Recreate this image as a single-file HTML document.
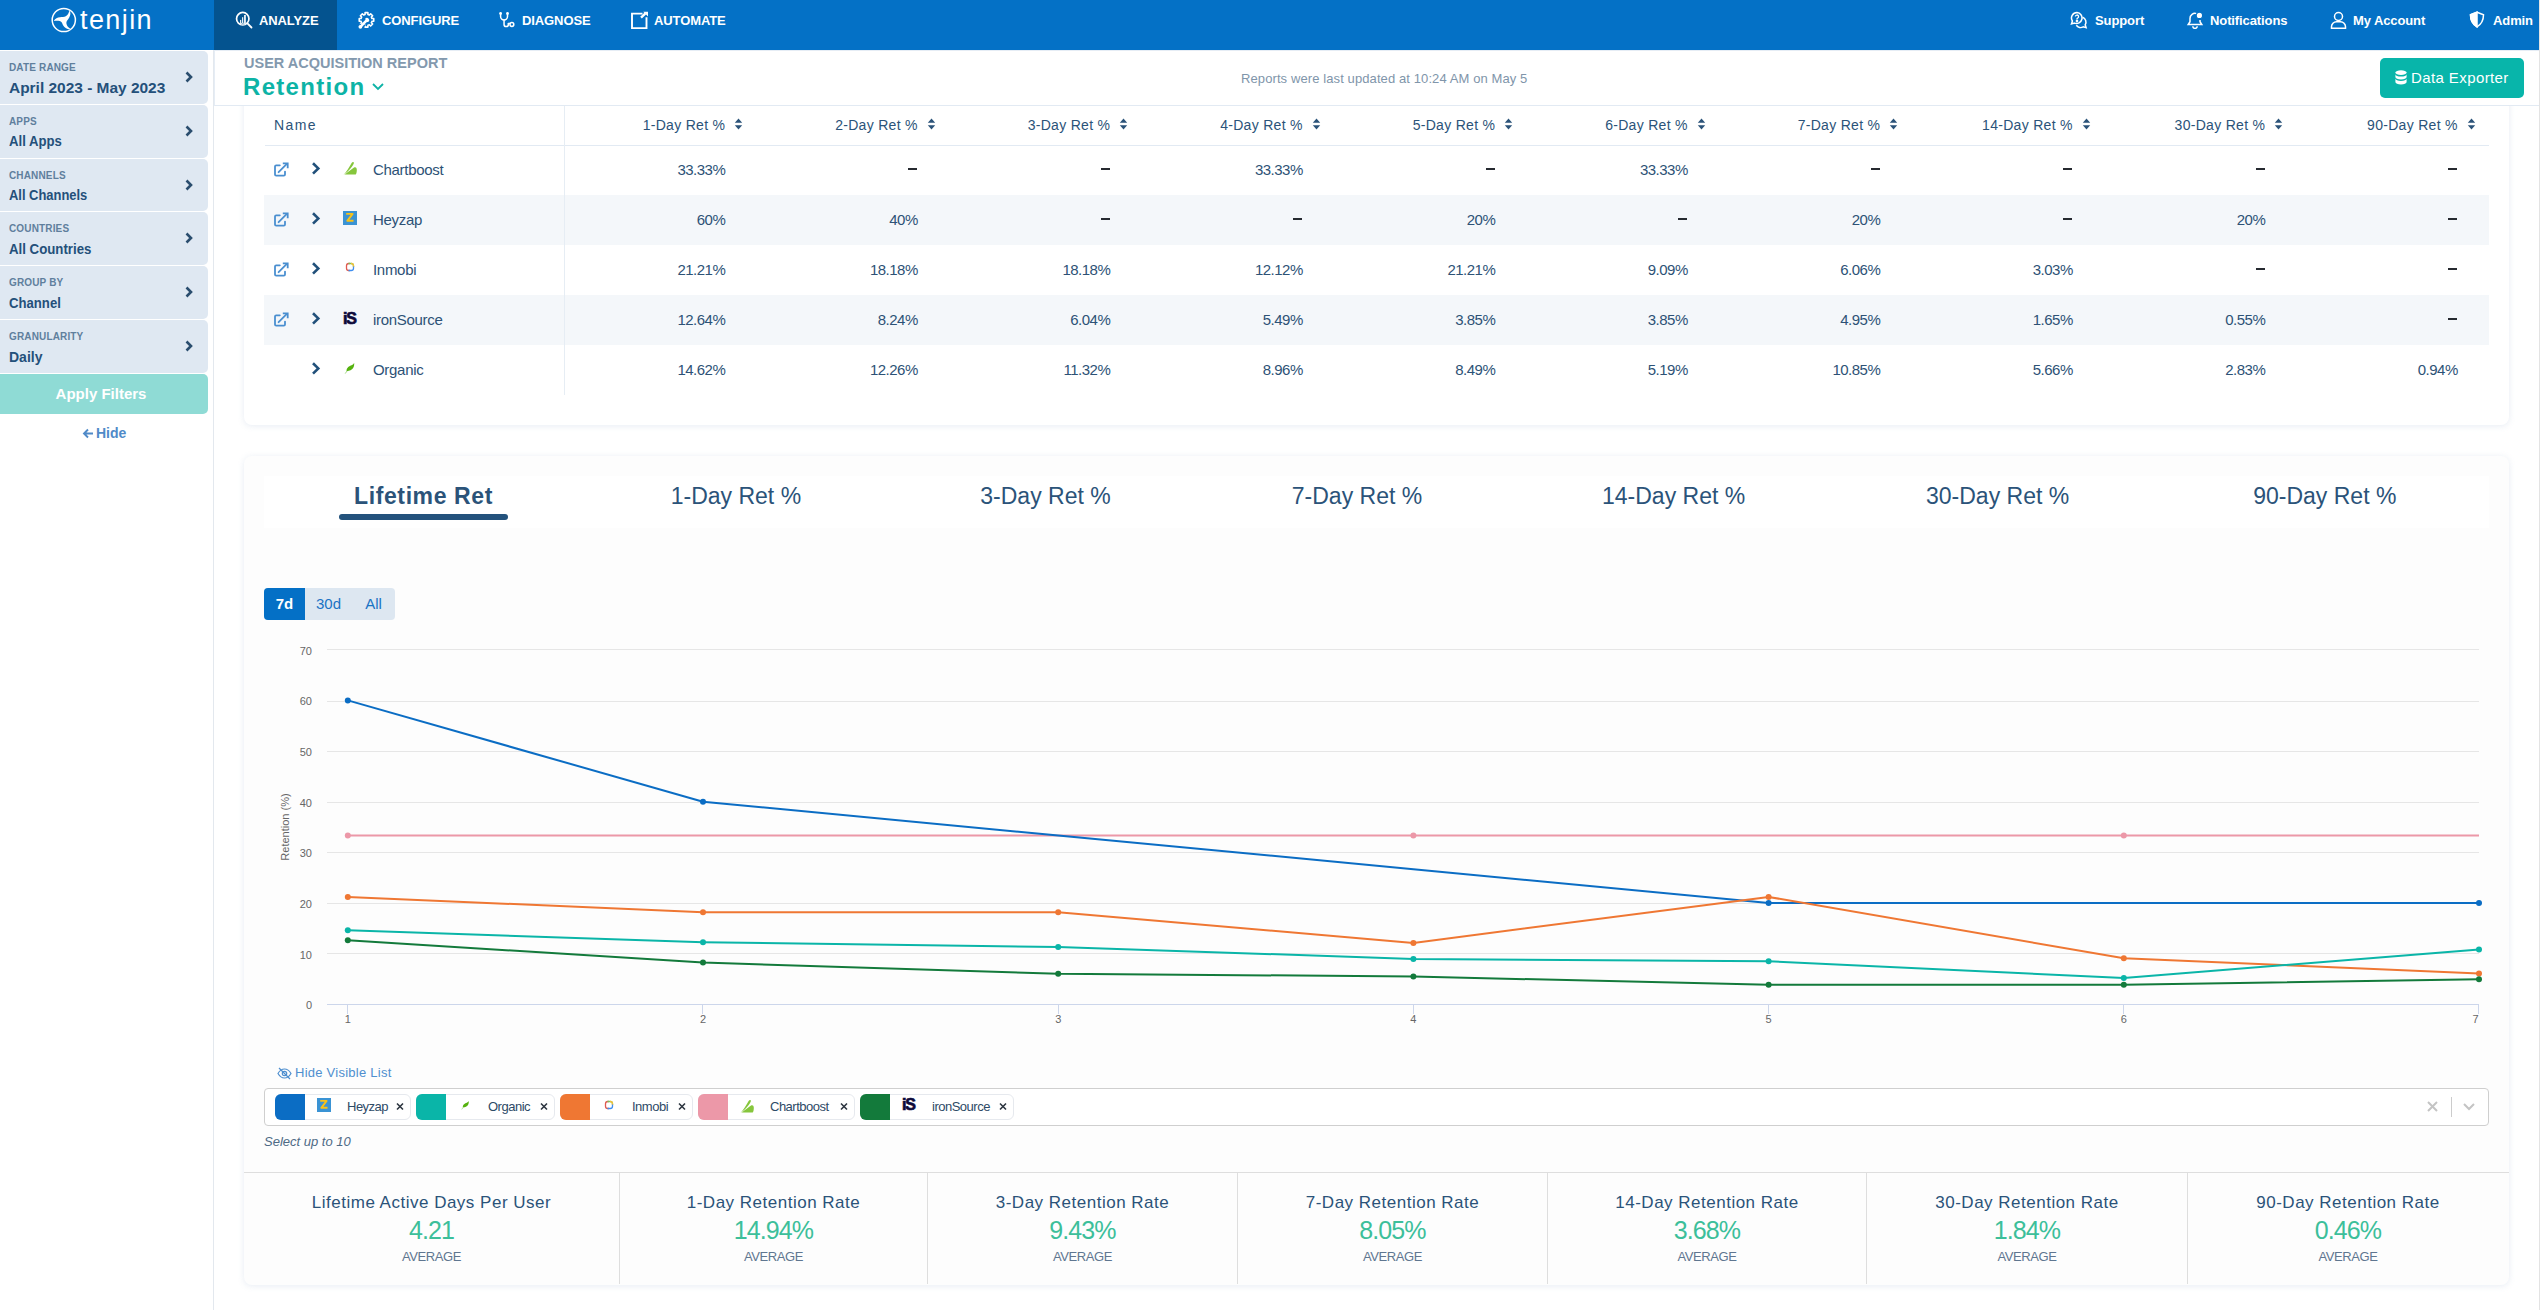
<!DOCTYPE html>
<html><head><meta charset="utf-8">
<style>
*{box-sizing:border-box;margin:0;padding:0}
html,body{width:2541px;height:1310px;overflow:hidden;background:#fff;font-family:"Liberation Sans",sans-serif;}
.a{position:absolute;white-space:nowrap}
#nav{position:absolute;left:0;top:0;width:2541px;height:50px;background:#0471c6}
#nav .it{position:absolute;top:0;height:50px;color:#fff;font-weight:bold;font-size:13px;line-height:42px;letter-spacing:-0.1px}
#side{position:absolute;left:0;top:50px;width:214px;height:1260px;border-right:1px solid #e3e8ee;background:#fff}
.sb{position:absolute;left:0;width:208px;height:52.8px;background:#dfe8f2;border-radius:0 5px 5px 0}
.sb .l{position:absolute;left:9px;top:11px;font-size:10px;font-weight:bold;color:#5f7f9d;letter-spacing:0.15px;line-height:12px}
.sb .v{position:absolute;left:9px;top:27.5px;font-size:15px;font-weight:bold;color:#24507a;line-height:18px;transform-origin:0 0}
.sb svg{position:absolute;left:184px;top:20px}
.th{font-size:14px;color:#2b5379;line-height:16px;letter-spacing:0.3px}
.td{font-size:15px;color:#2d5276;line-height:18px;letter-spacing:-0.5px}
.nm{letter-spacing:-0.3px}
.tab{font-size:23px;color:#2b5379;line-height:28px}
.tab.act{letter-spacing:0.6px}
.chip{font-size:13px;color:#2d4a66;line-height:16px;letter-spacing:-0.5px}
.st{font-size:17px;color:#2b5379;text-align:center;line-height:20px;letter-spacing:0.5px}
.sv{font-size:25px;color:#3cbf9a;text-align:center;line-height:30px;letter-spacing:-0.9px}
.sa{font-size:13px;color:#5f7690;text-align:center;line-height:16px;letter-spacing:-0.4px}
</style></head>
<body>
<div id="nav">
  <!-- logo -->
  <svg class="a" style="left:51px;top:7px" width="26" height="26" viewBox="0 0 26 26">
    <circle cx="12.8" cy="13" r="11.6" fill="none" stroke="#fff" stroke-width="1.5"/>
    <path d="M18.4 3.6 C20.2 6 19.6 9.6 16 13.8 C14.9 15.4 14.9 19 19.6 22.1 C15.5 22.6 12.6 19.8 11.3 16.4 C10.6 14.7 9.3 13.9 7.3 13.8 C5.8 13.7 4.4 13.9 2.8 14 C4.3 11.4 6.4 10.3 9 10.2 C11 10.1 13.1 10.3 14.8 9.3 C16.6 8.1 17.9 6.2 18.4 3.6 Z" fill="#fff"/>
  </svg>
  <div class="a" style="left:80px;top:3.3px;font-size:27px;color:#fff;letter-spacing:1.4px;line-height:34px">tenjin</div>
  <div class="a" style="left:214px;top:0;width:123px;height:50px;background:#04538f"></div>

  <!-- analyze icon -->
  <svg class="a" style="left:235px;top:11px" width="18" height="18" viewBox="0 0 18 18" fill="none" stroke="#fff" stroke-width="1.7">
    <circle cx="7.75" cy="7.66" r="6.2"/><path d="M12.4 12.4 L16.5 16.5" stroke-linecap="round" stroke-width="1.8"/>
    <rect x="5.1" y="8.9" width="1.1" height="3.2" fill="#fff" stroke="none"/><rect x="7.1" y="6.2" width="1.1" height="5.9" fill="#fff" stroke="none"/><rect x="9.1" y="4" width="1.7" height="8.1" fill="#fff" stroke="none"/>
    <ellipse cx="7.9" cy="12.6" rx="3" ry="0.9" fill="#fff" stroke="none"/><ellipse cx="7.9" cy="12.9" rx="2" ry="0.45" fill="#04538f" stroke="none"/>
  </svg>
  <div class="it" style="left:259px">ANALYZE</div>
  <svg class="a" style="left:357px;top:11px" width="19" height="19" viewBox="0 0 19 19">
    <path d="M7.36 3.73 L8.05 3.49 L8.09 1.64 L10.91 1.64 L10.95 3.49 L11.64 3.73 L12.30 4.05 L13.64 2.77 L15.63 4.76 L14.35 6.10 L14.67 6.76 L14.91 7.45 L16.76 7.49 L16.76 10.31 L14.91 10.35 L14.67 11.04 L14.35 11.70 L15.63 13.04 L13.64 15.03 L12.30 13.75 L11.64 14.07 L10.95 14.31 L10.91 16.16 L8.09 16.16 L8.05 14.31 L7.36 14.07 L6.70 13.75 L5.36 15.03 L3.37 13.04 L4.65 11.70 L4.33 11.04 L4.09 10.35 L2.24 10.31 L2.24 7.49 L4.09 7.45 L4.33 6.76 L4.65 6.10 L3.37 4.76 L5.36 2.77 L6.70 4.05Z" fill="none" stroke="#fff" stroke-width="1.6" stroke-linejoin="round"/>
    <path d="M2 12.5 L4 16.5 L7 16 L9 14 Z" fill="#0471c6"/>
    <path d="M3.6 15.6 L9.6 9.4" stroke="#fff" stroke-width="2.6" stroke-linecap="round"/>
    <circle cx="3.4" cy="15.8" r="1.9" fill="#fff"/>
    <path d="M8.2 7.6 a2.3 2.3 0 1 1 3.4 3.2 L9.6 11.2Z" fill="#fff"/>
  </svg>
  <div class="it" style="left:382px">CONFIGURE</div>
  <svg class="a" style="left:497px;top:11px" width="20" height="18" viewBox="0 0 20 18" fill="none" stroke="#fff" stroke-width="1.5" stroke-linecap="round">
    <path d="M3.6 2.8V5.6a3.45 3.45 0 0 0 6.9 0V2.8"/><path d="M7.05 9.1V13.4a2.15 2.15 0 0 0 4.3 0V12.8"/><circle cx="14.9" cy="13.5" r="1.9"/>
    <path d="M11.4 12.6 L13 12.4" />
    <circle cx="3.6" cy="2.5" r="1.4" fill="#fff" stroke="none"/><circle cx="10.5" cy="2.5" r="1.4" fill="#fff" stroke="none"/>
  </svg>
  <div class="it" style="left:522px">DIAGNOSE</div>
  <svg class="a" style="left:630px;top:10px" width="19" height="19" viewBox="0 0 19 19" fill="none" stroke="#fff" stroke-width="1.9">
    <path d="M12.5 3.6H2V18.1H16.5V7.2"/><path d="M11 7.6 L15.5 3.4" stroke-width="2.4"/><path d="M13.2 1.8H18V6.4Z" fill="#fff" stroke="none"/>
  </svg>
  <div class="it" style="left:654px">AUTOMATE</div>

  <!-- right items -->
  <svg class="a" style="left:2070px;top:11px" width="18" height="18" viewBox="0 0 18 18" fill="none" stroke="#fff" stroke-width="1.5">
    <path d="M7 1.5a5.5 5.5 0 0 0-4.6 8.5L1.5 13l3-.9A5.5 5.5 0 1 0 7 1.5z"/>
    <path d="M12.6 6.2a5.2 5.2 0 0 1 2.6 7.6l.9 2.9-2.9-.9a5.2 5.2 0 0 1-6.9-1.5"/>
    <path d="M5.4 5.6a1.6 1.6 0 1 1 2.2 1.5c-.5.2-.6.5-.6 1v.4" stroke-width="1.3"/><circle cx="7" cy="10.1" r=".6" fill="#fff"/>
  </svg>
  <div class="it" style="left:2095px">Support</div>
  <svg class="a" style="left:2186px;top:11px" width="18" height="18" viewBox="0 0 18 18" fill="none" stroke="#fff" stroke-width="1.5">
    <path d="M10.5 2.6A5 5 0 0 0 4 7.4v3.3L2.2 13.5h13.6L14 10.7V9"/><path d="M6.8 15.2a2.2 2.2 0 0 0 4.4 0"/>
    <circle cx="13.4" cy="4.4" r="3.2" fill="#fff" stroke="#0471c6" stroke-width="1.2"/>
  </svg>
  <div class="it" style="left:2210px">Notifications</div>
  <svg class="a" style="left:2330px;top:11px" width="17" height="18" viewBox="0 0 17 18" fill="none" stroke="#fff" stroke-width="1.5">
    <circle cx="8.5" cy="5.5" r="4"/><path d="M1.5 17.2v-1.5a5 5 0 0 1 5-5h4a5 5 0 0 1 5 5v1.5z"/>
  </svg>
  <div class="it" style="left:2353px">My Account</div>
  <svg class="a" style="left:2469px;top:11px" width="16" height="17" viewBox="0 0 16 17" fill="none" stroke="#fff" stroke-width="1.5">
    <path d="M8 1.2 L14.5 3.8 C14.5 9.5 12 13.5 8 15.8 C4 13.5 1.5 9.5 1.5 3.8 Z"/><path d="M8 1.2 V15.8 C4 13.5 1.5 9.5 1.5 3.8 Z" fill="#fff"/>
  </svg>
  <div class="it" style="left:2493px">Admin</div>
</div>

<div id="side">
  <div class="sb" style="top:1px"><div class="l">DATE RANGE</div><div class="v" style="transform:scaleX(1.03)">April 2023 - May 2023</div><svg width="10" height="12" viewBox="0 0 10 12"><path d="M2.5 1.5 L7 6 L2.5 10.5" fill="none" stroke="#2a4d6e" stroke-width="2.6"/></svg></div>
  <div class="sb" style="top:54.8px"><div class="l">APPS</div><div class="v" style="transform:scaleX(0.875)">All Apps</div><svg width="10" height="12" viewBox="0 0 10 12"><path d="M2.5 1.5 L7 6 L2.5 10.5" fill="none" stroke="#2a4d6e" stroke-width="2.6"/></svg></div>
  <div class="sb" style="top:108.6px"><div class="l">CHANNELS</div><div class="v" style="transform:scaleX(0.862)">All Channels</div><svg width="10" height="12" viewBox="0 0 10 12"><path d="M2.5 1.5 L7 6 L2.5 10.5" fill="none" stroke="#2a4d6e" stroke-width="2.6"/></svg></div>
  <div class="sb" style="top:162.4px"><div class="l">COUNTRIES</div><div class="v" style="transform:scaleX(0.883)">All Countries</div><svg width="10" height="12" viewBox="0 0 10 12"><path d="M2.5 1.5 L7 6 L2.5 10.5" fill="none" stroke="#2a4d6e" stroke-width="2.6"/></svg></div>
  <div class="sb" style="top:216.2px"><div class="l">GROUP BY</div><div class="v" style="transform:scaleX(0.876)">Channel</div><svg width="10" height="12" viewBox="0 0 10 12"><path d="M2.5 1.5 L7 6 L2.5 10.5" fill="none" stroke="#2a4d6e" stroke-width="2.6"/></svg></div>
  <div class="sb" style="top:270px"><div class="l">GRANULARITY</div><div class="v" style="transform:scaleX(0.934)">Daily</div><svg width="10" height="12" viewBox="0 0 10 12"><path d="M2.5 1.5 L7 6 L2.5 10.5" fill="none" stroke="#2a4d6e" stroke-width="2.6"/></svg></div>
  <div class="a" style="left:0;top:324px;width:208px;height:40px;background:#8fdbd5;border-radius:0 5px 5px 0;color:#fff;font-weight:bold;font-size:15px;text-align:center;line-height:40px;padding-right:6px">Apply Filters</div>
  <svg class="a" style="left:82px;top:378px" width="12" height="11" viewBox="0 0 12 11"><path d="M11 5.5H2.5M6 1.5L2 5.5L6 9.5" fill="none" stroke="#508ac8" stroke-width="1.9"/></svg>
  <div class="a" style="left:96px;top:375px;font-size:14px;font-weight:bold;color:#508ac8;line-height:17px">Hide</div>
</div>

<!-- table -->
<div class="a" style="left:244px;top:60px;width:2265px;height:365px;background:#fff;border-radius:8px;box-shadow:0 1px 6px rgba(120,150,190,0.18)"></div>
<div class="a" style="left:265px;top:145px;width:2224px;height:1px;background:#e2eaf3"></div>
<div class="a" style="left:564px;top:105px;width:1px;height:290px;background:#e6edf4;z-index:2"></div>
<div class="a th" style="left:274px;top:117px;letter-spacing:1.4px">Name</div>
<div class="a th" style="left:525.3px;width:200px;top:117px;text-align:right">1-Day Ret %</div>
<svg class="a" style="left:734.3px;top:117px" width="9" height="14" viewBox="0 0 9 14"><path d="M4.5 1.5 L8.2 5.8 H0.8Z M4.5 12.5 L8.2 8.2 H0.8Z" fill="#2b5379"/></svg>
<div class="a th" style="left:717.8px;width:200px;top:117px;text-align:right">2-Day Ret %</div>
<svg class="a" style="left:926.8px;top:117px" width="9" height="14" viewBox="0 0 9 14"><path d="M4.5 1.5 L8.2 5.8 H0.8Z M4.5 12.5 L8.2 8.2 H0.8Z" fill="#2b5379"/></svg>
<div class="a th" style="left:910.3px;width:200px;top:117px;text-align:right">3-Day Ret %</div>
<svg class="a" style="left:1119.3px;top:117px" width="9" height="14" viewBox="0 0 9 14"><path d="M4.5 1.5 L8.2 5.8 H0.8Z M4.5 12.5 L8.2 8.2 H0.8Z" fill="#2b5379"/></svg>
<div class="a th" style="left:1102.8px;width:200px;top:117px;text-align:right">4-Day Ret %</div>
<svg class="a" style="left:1311.8px;top:117px" width="9" height="14" viewBox="0 0 9 14"><path d="M4.5 1.5 L8.2 5.8 H0.8Z M4.5 12.5 L8.2 8.2 H0.8Z" fill="#2b5379"/></svg>
<div class="a th" style="left:1295.3px;width:200px;top:117px;text-align:right">5-Day Ret %</div>
<svg class="a" style="left:1504.3px;top:117px" width="9" height="14" viewBox="0 0 9 14"><path d="M4.5 1.5 L8.2 5.8 H0.8Z M4.5 12.5 L8.2 8.2 H0.8Z" fill="#2b5379"/></svg>
<div class="a th" style="left:1487.8px;width:200px;top:117px;text-align:right">6-Day Ret %</div>
<svg class="a" style="left:1696.8px;top:117px" width="9" height="14" viewBox="0 0 9 14"><path d="M4.5 1.5 L8.2 5.8 H0.8Z M4.5 12.5 L8.2 8.2 H0.8Z" fill="#2b5379"/></svg>
<div class="a th" style="left:1680.3px;width:200px;top:117px;text-align:right">7-Day Ret %</div>
<svg class="a" style="left:1889.3px;top:117px" width="9" height="14" viewBox="0 0 9 14"><path d="M4.5 1.5 L8.2 5.8 H0.8Z M4.5 12.5 L8.2 8.2 H0.8Z" fill="#2b5379"/></svg>
<div class="a th" style="left:1872.8px;width:200px;top:117px;text-align:right">14-Day Ret %</div>
<svg class="a" style="left:2081.8px;top:117px" width="9" height="14" viewBox="0 0 9 14"><path d="M4.5 1.5 L8.2 5.8 H0.8Z M4.5 12.5 L8.2 8.2 H0.8Z" fill="#2b5379"/></svg>
<div class="a th" style="left:2065.3px;width:200px;top:117px;text-align:right">30-Day Ret %</div>
<svg class="a" style="left:2274.3px;top:117px" width="9" height="14" viewBox="0 0 9 14"><path d="M4.5 1.5 L8.2 5.8 H0.8Z M4.5 12.5 L8.2 8.2 H0.8Z" fill="#2b5379"/></svg>
<div class="a th" style="left:2257.8px;width:200px;top:117px;text-align:right">90-Day Ret %</div>
<svg class="a" style="left:2466.8px;top:117px" width="9" height="14" viewBox="0 0 9 14"><path d="M4.5 1.5 L8.2 5.8 H0.8Z M4.5 12.5 L8.2 8.2 H0.8Z" fill="#2b5379"/></svg>
<svg class="a" style="left:273px;top:162px" width="16" height="16" viewBox="0 0 16 16" fill="none" stroke="#4a8fd0" stroke-width="1.8" stroke-linecap="round"><path d="M6.8 3.3H3.2Q2 3.3 2 4.5V12.5Q2 13.7 3.2 13.7H10.8Q12 13.7 12 12.5V9.6"/><path d="M5.6 10.2L13.6 2.2"/><path d="M9.8 1.3H14.7V6.2" stroke-linecap="butt"/></svg>
<svg class="a" style="left:310px;top:161px" width="12" height="14" viewBox="0 0 12 14"><path d="M3 2.2 L8.3 7.4 L3 12.6" fill="none" stroke="#21507a" stroke-width="2.6"/></svg>
<svg class="a" style="left:343px;top:161px" width="15" height="15" viewBox="0 0 15 15"><path d="M0.6 14C3.5 10.5 6.5 6 8.6 2C9.3 0.7 10.9 0.5 10.9 1.8C10.9 3 9.8 4.6 8.5 6.3C6 9.5 3.5 12 0.6 14Z" fill="#86c63c"/><path d="M1.8 13.6C5 11 8.5 8.5 11 6.6C12.3 5.7 13.6 6.3 13.8 8.5C13.9 10.5 13.5 12.8 12.7 13.6Z" fill="#86c63c"/></svg>
<div class="a td nm" style="left:373px;top:161px">Chartboost</div>
<div class="a td" style="left:525.3px;width:200px;top:161px;text-align:right">33.33%</div>
<div class="a" style="left:908.3px;top:168px;width:9px;height:2px;background:#262a30"></div>
<div class="a" style="left:1100.8px;top:168px;width:9px;height:2px;background:#262a30"></div>
<div class="a td" style="left:1102.8px;width:200px;top:161px;text-align:right">33.33%</div>
<div class="a" style="left:1485.8px;top:168px;width:9px;height:2px;background:#262a30"></div>
<div class="a td" style="left:1487.8px;width:200px;top:161px;text-align:right">33.33%</div>
<div class="a" style="left:1870.8px;top:168px;width:9px;height:2px;background:#262a30"></div>
<div class="a" style="left:2063.3px;top:168px;width:9px;height:2px;background:#262a30"></div>
<div class="a" style="left:2255.8px;top:168px;width:9px;height:2px;background:#262a30"></div>
<div class="a" style="left:2448.3px;top:168px;width:9px;height:2px;background:#262a30"></div>
<div class="a" style="left:264px;top:195px;width:2225px;height:50px;background:#f4f7fa"></div>
<svg class="a" style="left:273px;top:212px" width="16" height="16" viewBox="0 0 16 16" fill="none" stroke="#4a8fd0" stroke-width="1.8" stroke-linecap="round"><path d="M6.8 3.3H3.2Q2 3.3 2 4.5V12.5Q2 13.7 3.2 13.7H10.8Q12 13.7 12 12.5V9.6"/><path d="M5.6 10.2L13.6 2.2"/><path d="M9.8 1.3H14.7V6.2" stroke-linecap="butt"/></svg>
<svg class="a" style="left:310px;top:211px" width="12" height="14" viewBox="0 0 12 14"><path d="M3 2.2 L8.3 7.4 L3 12.6" fill="none" stroke="#21507a" stroke-width="2.6"/></svg>
<svg class="a" style="left:343px;top:211px" width="14" height="14" viewBox="0 0 14 14"><rect x="0" y="0" width="14" height="14" fill="#3a93d4"/><path d="M3.2 2.9H9.6L4.3 9.8H10.5" fill="none" stroke="#f8c217" stroke-width="1.9" stroke-linejoin="round"/></svg>
<div class="a td nm" style="left:373px;top:211px">Heyzap</div>
<div class="a td" style="left:525.3px;width:200px;top:211px;text-align:right">60%</div>
<div class="a td" style="left:717.8px;width:200px;top:211px;text-align:right">40%</div>
<div class="a" style="left:1100.8px;top:218px;width:9px;height:2px;background:#262a30"></div>
<div class="a" style="left:1293.3px;top:218px;width:9px;height:2px;background:#262a30"></div>
<div class="a td" style="left:1295.3px;width:200px;top:211px;text-align:right">20%</div>
<div class="a" style="left:1678.3px;top:218px;width:9px;height:2px;background:#262a30"></div>
<div class="a td" style="left:1680.3px;width:200px;top:211px;text-align:right">20%</div>
<div class="a" style="left:2063.3px;top:218px;width:9px;height:2px;background:#262a30"></div>
<div class="a td" style="left:2065.3px;width:200px;top:211px;text-align:right">20%</div>
<div class="a" style="left:2448.3px;top:218px;width:9px;height:2px;background:#262a30"></div>
<svg class="a" style="left:273px;top:262px" width="16" height="16" viewBox="0 0 16 16" fill="none" stroke="#4a8fd0" stroke-width="1.8" stroke-linecap="round"><path d="M6.8 3.3H3.2Q2 3.3 2 4.5V12.5Q2 13.7 3.2 13.7H10.8Q12 13.7 12 12.5V9.6"/><path d="M5.6 10.2L13.6 2.2"/><path d="M9.8 1.3H14.7V6.2" stroke-linecap="butt"/></svg>
<svg class="a" style="left:310px;top:261px" width="12" height="14" viewBox="0 0 12 14"><path d="M3 2.2 L8.3 7.4 L3 12.6" fill="none" stroke="#21507a" stroke-width="2.6"/></svg>
<svg class="a" style="left:345px;top:262px" width="10" height="10" viewBox="0 0 10 10"><g fill="none" stroke-width="1.3"><path d="M1.5 5V3.8a2.3 2.3 0 0 1 2.3-2.3H5" stroke="#e05a4f"/><path d="M1.5 5v1.2a2.3 2.3 0 0 0 2.3 2.3H5" stroke="#e05a4f"/><path d="M3.5 1.5H6.2a2.3 2.3 0 0 1 2.3 2.3V5" stroke="#7cc35a"/><path d="M6 1.5h.2a2.3 2.3 0 0 1 2.3 2.3V5" stroke="#f2c13a"/><path d="M8.5 4.5v1.7a2.3 2.3 0 0 1-2.3 2.3H3.5" stroke="#3e8ef0"/></g></svg>
<div class="a td nm" style="left:373px;top:261px">Inmobi</div>
<div class="a td" style="left:525.3px;width:200px;top:261px;text-align:right">21.21%</div>
<div class="a td" style="left:717.8px;width:200px;top:261px;text-align:right">18.18%</div>
<div class="a td" style="left:910.3px;width:200px;top:261px;text-align:right">18.18%</div>
<div class="a td" style="left:1102.8px;width:200px;top:261px;text-align:right">12.12%</div>
<div class="a td" style="left:1295.3px;width:200px;top:261px;text-align:right">21.21%</div>
<div class="a td" style="left:1487.8px;width:200px;top:261px;text-align:right">9.09%</div>
<div class="a td" style="left:1680.3px;width:200px;top:261px;text-align:right">6.06%</div>
<div class="a td" style="left:1872.8px;width:200px;top:261px;text-align:right">3.03%</div>
<div class="a" style="left:2255.8px;top:268px;width:9px;height:2px;background:#262a30"></div>
<div class="a" style="left:2448.3px;top:268px;width:9px;height:2px;background:#262a30"></div>
<div class="a" style="left:264px;top:295px;width:2225px;height:50px;background:#f4f7fa"></div>
<svg class="a" style="left:273px;top:312px" width="16" height="16" viewBox="0 0 16 16" fill="none" stroke="#4a8fd0" stroke-width="1.8" stroke-linecap="round"><path d="M6.8 3.3H3.2Q2 3.3 2 4.5V12.5Q2 13.7 3.2 13.7H10.8Q12 13.7 12 12.5V9.6"/><path d="M5.6 10.2L13.6 2.2"/><path d="M9.8 1.3H14.7V6.2" stroke-linecap="butt"/></svg>
<svg class="a" style="left:310px;top:311px" width="12" height="14" viewBox="0 0 12 14"><path d="M3 2.2 L8.3 7.4 L3 12.6" fill="none" stroke="#21507a" stroke-width="2.6"/></svg>
<div class="a" style="left:343px;top:311px;font-size:16px;font-weight:bold;color:#0d0a3a;letter-spacing:-1.2px;line-height:16px;-webkit-text-stroke:0.7px #0d0a3a">iS</div>
<div class="a td nm" style="left:373px;top:311px">ironSource</div>
<div class="a td" style="left:525.3px;width:200px;top:311px;text-align:right">12.64%</div>
<div class="a td" style="left:717.8px;width:200px;top:311px;text-align:right">8.24%</div>
<div class="a td" style="left:910.3px;width:200px;top:311px;text-align:right">6.04%</div>
<div class="a td" style="left:1102.8px;width:200px;top:311px;text-align:right">5.49%</div>
<div class="a td" style="left:1295.3px;width:200px;top:311px;text-align:right">3.85%</div>
<div class="a td" style="left:1487.8px;width:200px;top:311px;text-align:right">3.85%</div>
<div class="a td" style="left:1680.3px;width:200px;top:311px;text-align:right">4.95%</div>
<div class="a td" style="left:1872.8px;width:200px;top:311px;text-align:right">1.65%</div>
<div class="a td" style="left:2065.3px;width:200px;top:311px;text-align:right">0.55%</div>
<div class="a" style="left:2448.3px;top:318px;width:9px;height:2px;background:#262a30"></div>
<svg class="a" style="left:310px;top:361px" width="12" height="14" viewBox="0 0 12 14"><path d="M3 2.2 L8.3 7.4 L3 12.6" fill="none" stroke="#21507a" stroke-width="2.6"/></svg>
<svg class="a" style="left:343px;top:361px" width="14" height="14" viewBox="0 0 14 14"><path d="M3.6 10.2 C3.3 6.5 6.5 4.8 8.6 4.2 C10 3.6 10.6 2.8 11.2 2 C11.4 5.5 10.3 9.8 3.6 10.2 Z" fill="#55b20e"/><path d="M2.2 12.6 L4 10" stroke="#a6d98a" stroke-width="1"/></svg>
<div class="a td nm" style="left:373px;top:361px">Organic</div>
<div class="a td" style="left:525.3px;width:200px;top:361px;text-align:right">14.62%</div>
<div class="a td" style="left:717.8px;width:200px;top:361px;text-align:right">12.26%</div>
<div class="a td" style="left:910.3px;width:200px;top:361px;text-align:right">11.32%</div>
<div class="a td" style="left:1102.8px;width:200px;top:361px;text-align:right">8.96%</div>
<div class="a td" style="left:1295.3px;width:200px;top:361px;text-align:right">8.49%</div>
<div class="a td" style="left:1487.8px;width:200px;top:361px;text-align:right">5.19%</div>
<div class="a td" style="left:1680.3px;width:200px;top:361px;text-align:right">10.85%</div>
<div class="a td" style="left:1872.8px;width:200px;top:361px;text-align:right">5.66%</div>
<div class="a td" style="left:2065.3px;width:200px;top:361px;text-align:right">2.83%</div>
<div class="a td" style="left:2257.8px;width:200px;top:361px;text-align:right">0.94%</div>
<div class="a" style="left:244px;top:456px;width:2265px;height:829px;background:#fdfdfd;border-radius:8px;box-shadow:0 1px 6px rgba(120,150,190,0.18)"></div>
<div class="a" style="left:264px;top:475.5px;width:2225px;height:52.5px;background:#fff"></div>
<div class="a tab" style="left:273.5px;width:300px;top:482px;text-align:center;font-weight:bold;letter-spacing:0.6px">Lifetime Ret</div>
<div class="a tab" style="left:585.9px;width:300px;top:482px;text-align:center;font-weight:normal">1-Day Ret %</div>
<div class="a tab" style="left:895.5px;width:300px;top:482px;text-align:center;font-weight:normal">3-Day Ret %</div>
<div class="a tab" style="left:1207.0px;width:300px;top:482px;text-align:center;font-weight:normal">7-Day Ret %</div>
<div class="a tab" style="left:1523.6px;width:300px;top:482px;text-align:center;font-weight:normal">14-Day Ret %</div>
<div class="a tab" style="left:1847.6px;width:300px;top:482px;text-align:center;font-weight:normal">30-Day Ret %</div>
<div class="a tab" style="left:2174.8px;width:300px;top:482px;text-align:center;font-weight:normal">90-Day Ret %</div>
<div class="a" style="left:339px;top:514px;width:169px;height:6px;border-radius:3px;background:#23527c"></div>
<div class="a" style="left:264px;top:588px;width:131px;height:32px;background:#dde7f1;border-radius:4px"></div>
<div class="a" style="left:264px;top:588px;width:41px;height:32px;background:#0470c6;border-radius:4px 0 0 4px;color:#fff;font-size:15px;font-weight:bold;text-align:center;line-height:32px">7d</div>
<div class="a" style="left:305px;top:588px;width:47px;height:32px;color:#1a73c4;font-size:15px;text-align:center;line-height:32px">30d</div>
<div class="a" style="left:352px;top:588px;width:43px;height:32px;color:#1a73c4;font-size:15px;text-align:center;line-height:32px">All</div>
<svg class="a" style="left:0;top:0" width="2541" height="1310" viewBox="0 0 2541 1310">
<path d="M327 1004.5 H2479" stroke="#ccd6eb" stroke-width="1"/>
<text x="312" y="1009.3" text-anchor="end" font-size="11" fill="#666">0</text>
<path d="M327 953.5 H2479" stroke="#e6e6e6" stroke-width="1"/>
<text x="312" y="958.7" text-anchor="end" font-size="11" fill="#666">10</text>
<path d="M327 903.5 H2479" stroke="#e6e6e6" stroke-width="1"/>
<text x="312" y="908.0" text-anchor="end" font-size="11" fill="#666">20</text>
<path d="M327 852.5 H2479" stroke="#e6e6e6" stroke-width="1"/>
<text x="312" y="857.4" text-anchor="end" font-size="11" fill="#666">30</text>
<path d="M327 802.5 H2479" stroke="#e6e6e6" stroke-width="1"/>
<text x="312" y="806.7" text-anchor="end" font-size="11" fill="#666">40</text>
<path d="M327 751.5 H2479" stroke="#e6e6e6" stroke-width="1"/>
<text x="312" y="756.1" text-anchor="end" font-size="11" fill="#666">50</text>
<path d="M327 701.5 H2479" stroke="#e6e6e6" stroke-width="1"/>
<text x="312" y="705.4" text-anchor="end" font-size="11" fill="#666">60</text>
<path d="M327 649.5 H2479" stroke="#e6e6e6" stroke-width="1"/>
<text x="312" y="654.8" text-anchor="end" font-size="11" fill="#666">70</text>
<path d="M347.5 1004 V1014" stroke="#ccd6eb" stroke-width="1"/>
<text x="347.8" y="1022.5" text-anchor="middle" font-size="11" fill="#666">1</text>
<path d="M702.5 1004 V1014" stroke="#ccd6eb" stroke-width="1"/>
<text x="703.0" y="1022.5" text-anchor="middle" font-size="11" fill="#666">2</text>
<path d="M1058.5 1004 V1014" stroke="#ccd6eb" stroke-width="1"/>
<text x="1058.2" y="1022.5" text-anchor="middle" font-size="11" fill="#666">3</text>
<path d="M1413.5 1004 V1014" stroke="#ccd6eb" stroke-width="1"/>
<text x="1413.4" y="1022.5" text-anchor="middle" font-size="11" fill="#666">4</text>
<path d="M1768.5 1004 V1014" stroke="#ccd6eb" stroke-width="1"/>
<text x="1768.6" y="1022.5" text-anchor="middle" font-size="11" fill="#666">5</text>
<path d="M2123.5 1004 V1014" stroke="#ccd6eb" stroke-width="1"/>
<text x="2123.8" y="1022.5" text-anchor="middle" font-size="11" fill="#666">6</text>
<path d="M2478.5 1004 V1014" stroke="#ccd6eb" stroke-width="1"/>
<text x="2475.5" y="1022.5" text-anchor="middle" font-size="11" fill="#666">7</text>
<text transform="translate(289 827) rotate(-90)" text-anchor="middle" font-size="11" fill="#666">Retention (%)</text>
<path d="M347.8 835.5 L703.0 835.5 L1058.2 835.5 L1413.4 835.5 L1768.6 835.5 L2123.8 835.5 L2479.0 835.5" fill="none" stroke="#ec98a8" stroke-width="2" stroke-linejoin="round"/>
<circle cx="347.8" cy="835.5" r="3" fill="#ec98a8"/>
<circle cx="1413.4" cy="835.5" r="3" fill="#ec98a8"/>
<circle cx="2123.8" cy="835.5" r="3" fill="#ec98a8"/>
<path d="M347.8 700.4 L703.0 801.7 L1058.2 835.5 L1413.4 869.2 L1768.6 903.0 L2123.8 903.0 L2479.0 903.0" fill="none" stroke="#0b6dc4" stroke-width="2" stroke-linejoin="round"/>
<circle cx="347.8" cy="700.4" r="3" fill="#0b6dc4"/>
<circle cx="703.0" cy="801.7" r="3" fill="#0b6dc4"/>
<circle cx="1768.6" cy="903.0" r="3" fill="#0b6dc4"/>
<circle cx="2479.0" cy="903.0" r="3" fill="#0b6dc4"/>
<path d="M347.8 896.9 L703.0 912.2 L1058.2 912.2 L1413.4 942.9 L1768.6 896.9 L2123.8 958.3 L2479.0 973.6" fill="none" stroke="#ef7733" stroke-width="2" stroke-linejoin="round"/>
<circle cx="347.8" cy="896.9" r="3" fill="#ef7733"/>
<circle cx="703.0" cy="912.2" r="3" fill="#ef7733"/>
<circle cx="1058.2" cy="912.2" r="3" fill="#ef7733"/>
<circle cx="1413.4" cy="942.9" r="3" fill="#ef7733"/>
<circle cx="1768.6" cy="896.9" r="3" fill="#ef7733"/>
<circle cx="2123.8" cy="958.3" r="3" fill="#ef7733"/>
<circle cx="2479.0" cy="973.6" r="3" fill="#ef7733"/>
<path d="M347.8 930.3 L703.0 942.2 L1058.2 947.0 L1413.4 958.9 L1768.6 961.3 L2123.8 978.0 L2479.0 949.4" fill="none" stroke="#0ab5a8" stroke-width="2" stroke-linejoin="round"/>
<circle cx="347.8" cy="930.3" r="3" fill="#0ab5a8"/>
<circle cx="703.0" cy="942.2" r="3" fill="#0ab5a8"/>
<circle cx="1058.2" cy="947.0" r="3" fill="#0ab5a8"/>
<circle cx="1413.4" cy="958.9" r="3" fill="#0ab5a8"/>
<circle cx="1768.6" cy="961.3" r="3" fill="#0ab5a8"/>
<circle cx="2123.8" cy="978.0" r="3" fill="#0ab5a8"/>
<circle cx="2479.0" cy="949.4" r="3" fill="#0ab5a8"/>
<path d="M347.8 940.3 L703.0 962.6 L1058.2 973.7 L1413.4 976.5 L1768.6 984.8 L2123.8 984.8 L2479.0 979.2" fill="none" stroke="#137a3b" stroke-width="2" stroke-linejoin="round"/>
<circle cx="347.8" cy="940.3" r="3" fill="#137a3b"/>
<circle cx="703.0" cy="962.6" r="3" fill="#137a3b"/>
<circle cx="1058.2" cy="973.7" r="3" fill="#137a3b"/>
<circle cx="1413.4" cy="976.5" r="3" fill="#137a3b"/>
<circle cx="1768.6" cy="984.8" r="3" fill="#137a3b"/>
<circle cx="2123.8" cy="984.8" r="3" fill="#137a3b"/>
<circle cx="2479.0" cy="979.2" r="3" fill="#137a3b"/>
</svg>
<svg class="a" style="left:277px;top:1067px" width="15" height="13" viewBox="0 0 15 13" fill="none" stroke="#4f8fcf" stroke-width="1.2"><path d="M1 6.5C3 3 5 2 7.5 2S12 3 14 6.5C12 10 10 11 7.5 11S3 10 1 6.5z"/><circle cx="7.5" cy="6.5" r="2.2"/><path d="M2 1 L13 12"/></svg>
<div class="a" style="left:295px;top:1065px;font-size:13px;color:#4f8fcf;letter-spacing:0.25px">Hide Visible List</div>
<div class="a" style="left:264px;top:1088px;width:2225px;height:38px;border:1px solid #cfcfcf;border-radius:4px;background:#fff"></div>
<div class="a" style="left:275px;top:1094px;width:136px;height:26px;border:1px solid #e6e9ee;border-radius:6px;background:#fff"></div>
<div class="a" style="left:275px;top:1094px;width:30px;height:26px;background:#0b6dc4;border-radius:6px 0 0 6px"></div>
<svg class="a" style="left:317px;top:1098px" width="14" height="14" viewBox="0 0 14 14"><rect width="14" height="14" fill="#3a93d4"/><path d="M3.2 2.9H9.6L4.3 9.8H10.5" fill="none" stroke="#f8c217" stroke-width="1.9" stroke-linejoin="round"/></svg>
<div class="a chip" style="left:347px;top:1099px">Heyzap</div>
<svg class="a" style="left:396px;top:1102px" width="8" height="9" viewBox="0 0 8 9"><path d="M1 1.5 L7 7.5 M7 1.5 L1 7.5" stroke="#2d3640" stroke-width="1.6"/></svg>
<div class="a" style="left:416px;top:1094px;width:139px;height:26px;border:1px solid #e6e9ee;border-radius:6px;background:#fff"></div>
<div class="a" style="left:416px;top:1094px;width:30px;height:26px;background:#0ab5a8;border-radius:6px 0 0 6px"></div>
<svg class="a" style="left:460px;top:1099px" width="11" height="12" viewBox="0 0 14 14"><path d="M3.6 10.2 C3.3 6.5 6.5 4.8 8.6 4.2 C10 3.6 10.6 2.8 11.2 2 C11.4 5.5 10.3 9.8 3.6 10.2 Z" fill="#55b20e"/><path d="M2.2 12.6 L4 10" stroke="#a6d98a" stroke-width="1"/></svg>
<div class="a chip" style="left:488px;top:1099px">Organic</div>
<svg class="a" style="left:540px;top:1102px" width="8" height="9" viewBox="0 0 8 9"><path d="M1 1.5 L7 7.5 M7 1.5 L1 7.5" stroke="#2d3640" stroke-width="1.6"/></svg>
<div class="a" style="left:560px;top:1094px;width:133px;height:26px;border:1px solid #e6e9ee;border-radius:6px;background:#fff"></div>
<div class="a" style="left:560px;top:1094px;width:30px;height:26px;background:#ef7733;border-radius:6px 0 0 6px"></div>
<svg class="a" style="left:604px;top:1100px" width="10" height="10" viewBox="0 0 10 10"><g fill="none" stroke-width="1.3"><path d="M1.5 5V3.8a2.3 2.3 0 0 1 2.3-2.3H5" stroke="#e05a4f"/><path d="M1.5 5v1.2a2.3 2.3 0 0 0 2.3 2.3H5" stroke="#e05a4f"/><path d="M3.5 1.5H6.2a2.3 2.3 0 0 1 2.3 2.3V5" stroke="#7cc35a"/><path d="M6 1.5h.2a2.3 2.3 0 0 1 2.3 2.3V5" stroke="#f2c13a"/><path d="M8.5 4.5v1.7a2.3 2.3 0 0 1-2.3 2.3H3.5" stroke="#3e8ef0"/></g></svg>
<div class="a chip" style="left:632px;top:1099px">Inmobi</div>
<svg class="a" style="left:678px;top:1102px" width="8" height="9" viewBox="0 0 8 9"><path d="M1 1.5 L7 7.5 M7 1.5 L1 7.5" stroke="#2d3640" stroke-width="1.6"/></svg>
<div class="a" style="left:698px;top:1094px;width:157px;height:26px;border:1px solid #e6e9ee;border-radius:6px;background:#fff"></div>
<div class="a" style="left:698px;top:1094px;width:30px;height:26px;background:#ec98a8;border-radius:6px 0 0 6px"></div>
<svg class="a" style="left:740px;top:1099px" width="14" height="14" viewBox="0 0 14 14"><path d="M0.6 14C3.5 10.5 6.5 6 8.6 2C9.3 0.7 10.9 0.5 10.9 1.8C10.9 3 9.8 4.6 8.5 6.3C6 9.5 3.5 12 0.6 14Z" fill="#86c63c"/><path d="M1.8 13.6C5 11 8.5 8.5 11 6.6C12.3 5.7 13.6 6.3 13.8 8.5C13.9 10.5 13.5 12.8 12.7 13.6Z" fill="#86c63c"/></svg>
<div class="a chip" style="left:770px;top:1099px">Chartboost</div>
<svg class="a" style="left:840px;top:1102px" width="8" height="9" viewBox="0 0 8 9"><path d="M1 1.5 L7 7.5 M7 1.5 L1 7.5" stroke="#2d3640" stroke-width="1.6"/></svg>
<div class="a" style="left:860px;top:1094px;width:154px;height:26px;border:1px solid #e6e9ee;border-radius:6px;background:#fff"></div>
<div class="a" style="left:860px;top:1094px;width:30px;height:26px;background:#137a3b;border-radius:6px 0 0 6px"></div>
<div class="a" style="left:902px;top:1097px;font-size:16px;font-weight:bold;color:#0d0a3a;letter-spacing:-1.2px;line-height:16px;-webkit-text-stroke:0.7px #0d0a3a">iS</div>
<div class="a chip" style="left:932px;top:1099px">ironSource</div>
<svg class="a" style="left:999px;top:1102px" width="8" height="9" viewBox="0 0 8 9"><path d="M1 1.5 L7 7.5 M7 1.5 L1 7.5" stroke="#2d3640" stroke-width="1.6"/></svg>
<svg class="a" style="left:2426px;top:1100px" width="13" height="13" viewBox="0 0 13 13"><path d="M2 2 L11 11 M11 2 L2 11" stroke="#c4c4c4" stroke-width="2"/></svg>
<div class="a" style="left:2451px;top:1097px;width:1px;height:20px;background:#cccccc"></div>
<svg class="a" style="left:2462px;top:1102px" width="14" height="9" viewBox="0 0 14 9"><path d="M2 2 L7 7 L12 2" fill="none" stroke="#c4c4c4" stroke-width="2"/></svg>
<div class="a" style="left:264px;top:1134px;font-size:13px;font-style:italic;color:#4e6a85">Select up to 10</div>
<div class="a" style="left:244px;top:1172px;width:2265px;height:1px;background:#dedede"></div>
<div class="a st" style="left:231.5px;width:400px;top:1193px">Lifetime Active Days Per User</div>
<div class="a sv" style="left:231.5px;width:400px;top:1215px">4.21</div>
<div class="a sa" style="left:231.5px;width:400px;top:1249px">AVERAGE</div>
<div class="a" style="left:619px;top:1173px;width:1px;height:111px;background:#dedede"></div>
<div class="a st" style="left:573.5px;width:400px;top:1193px">1-Day Retention Rate</div>
<div class="a sv" style="left:573.5px;width:400px;top:1215px">14.94%</div>
<div class="a sa" style="left:573.5px;width:400px;top:1249px">AVERAGE</div>
<div class="a" style="left:927px;top:1173px;width:1px;height:111px;background:#dedede"></div>
<div class="a st" style="left:882.5px;width:400px;top:1193px">3-Day Retention Rate</div>
<div class="a sv" style="left:882.5px;width:400px;top:1215px">9.43%</div>
<div class="a sa" style="left:882.5px;width:400px;top:1249px">AVERAGE</div>
<div class="a" style="left:1237px;top:1173px;width:1px;height:111px;background:#dedede"></div>
<div class="a st" style="left:1192.5px;width:400px;top:1193px">7-Day Retention Rate</div>
<div class="a sv" style="left:1192.5px;width:400px;top:1215px">8.05%</div>
<div class="a sa" style="left:1192.5px;width:400px;top:1249px">AVERAGE</div>
<div class="a" style="left:1547px;top:1173px;width:1px;height:111px;background:#dedede"></div>
<div class="a st" style="left:1507.0px;width:400px;top:1193px">14-Day Retention Rate</div>
<div class="a sv" style="left:1507.0px;width:400px;top:1215px">3.68%</div>
<div class="a sa" style="left:1507.0px;width:400px;top:1249px">AVERAGE</div>
<div class="a" style="left:1866px;top:1173px;width:1px;height:111px;background:#dedede"></div>
<div class="a st" style="left:1827.0px;width:400px;top:1193px">30-Day Retention Rate</div>
<div class="a sv" style="left:1827.0px;width:400px;top:1215px">1.84%</div>
<div class="a sa" style="left:1827.0px;width:400px;top:1249px">AVERAGE</div>
<div class="a" style="left:2187px;top:1173px;width:1px;height:111px;background:#dedede"></div>
<div class="a st" style="left:2148.0px;width:400px;top:1193px">90-Day Retention Rate</div>
<div class="a sv" style="left:2148.0px;width:400px;top:1215px">0.46%</div>
<div class="a sa" style="left:2148.0px;width:400px;top:1249px">AVERAGE</div>
<!-- header -->
<div class="a" style="left:214px;top:50px;width:2327px;height:56px;border-top:1px solid #e6edf5;border-left:1px solid #e6edf5;border-bottom:1px solid #e2eaf3;background:#fff;z-index:3"></div>
<div class="a" style="left:244px;top:55px;font-size:14.5px;font-weight:bold;color:#8399ae;z-index:4">USER ACQUISITION REPORT</div>
<div class="a" style="left:243px;top:73px;font-size:24px;font-weight:bold;color:#0db3a6;z-index:4;letter-spacing:1.3px">Retention</div>
<svg class="a" style="left:371px;top:82px;z-index:4" width="14" height="9" viewBox="0 0 14 9"><path d="M2 2 L7 7 L12 2" fill="none" stroke="#0db3a6" stroke-width="1.8"/></svg>
<div class="a" style="left:1241px;top:71px;font-size:13px;color:#8095aa;z-index:4;letter-spacing:0.1px">Reports were last updated at 10:24 AM on May 5</div>
<div class="a" style="left:2380px;top:58px;width:144px;height:40px;background:#08b5aa;border-radius:5px;z-index:4"></div>
<svg class="a" style="left:2395px;top:70px;z-index:5" width="12" height="15" viewBox="0 0 12 15" fill="#fff">
  <ellipse cx="6" cy="2.6" rx="5.6" ry="2.4"/><path d="M0.4 4.2c0 1.4 2.5 2.4 5.6 2.4s5.6-1 5.6-2.4v2.8c0 1.4-2.5 2.4-5.6 2.4S0.4 8.4 0.4 7z"/><path d="M0.4 8.6c0 1.4 2.5 2.4 5.6 2.4s5.6-1 5.6-2.4v3.4c0 1.4-2.5 2.4-5.6 2.4S0.4 13.4 0.4 12z"/>
</svg>
<div class="a" style="left:2411px;top:69px;font-size:15px;color:#fff;z-index:5;letter-spacing:0.4px">Data Exporter</div>
<div class="a" style="left:2539px;top:0;width:2px;height:1310px;background:#fff;border-left:1px solid #e3e3e3;z-index:20"></div>
</body></html>
